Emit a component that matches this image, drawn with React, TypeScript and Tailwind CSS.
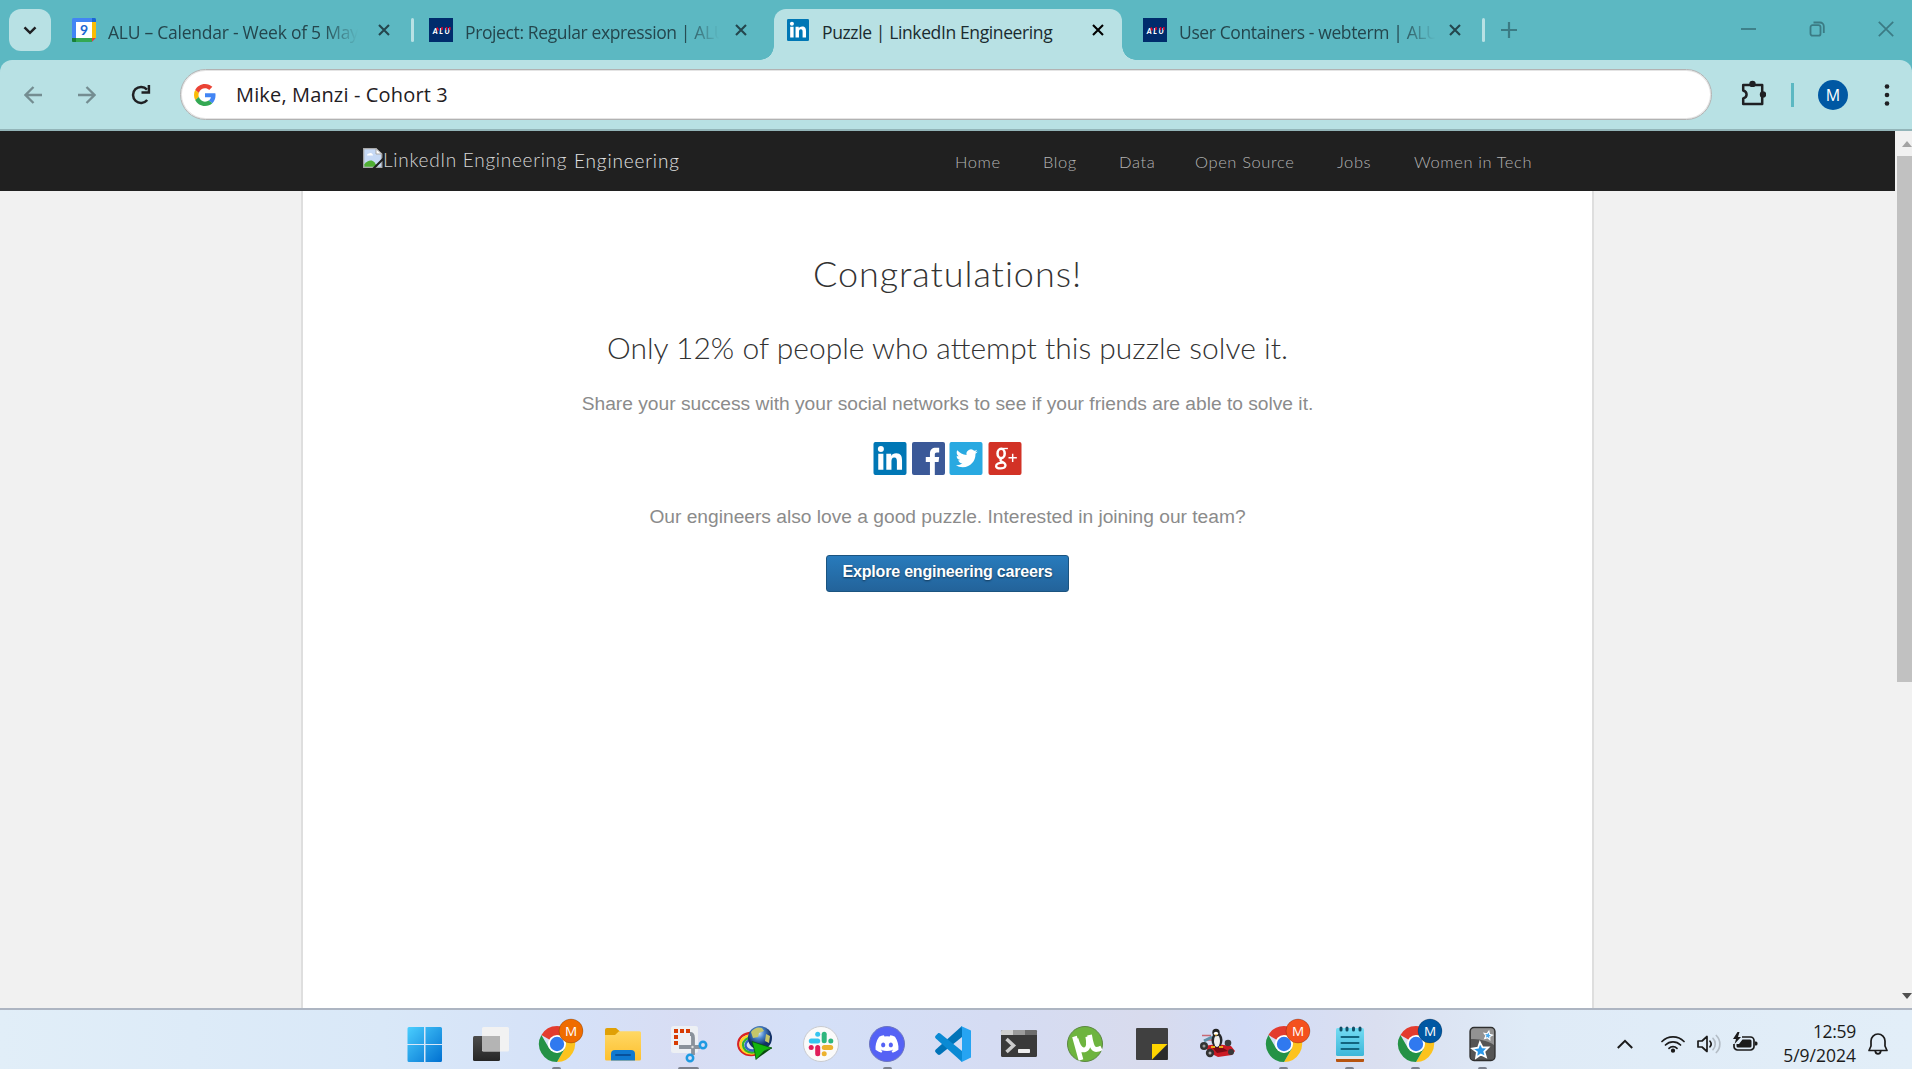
import type { ReactNode } from "react";

/* ---------- favicons and small marks ---------- */

function CalendarIcon() {
  return (
    <svg viewBox="0 0 24 24" className="size-6 shrink-0">
      <rect width="24" height="24" rx="1.5" fill="#4285f4" />
      <path d="M20 0h2.500a1.500 1.500 0 0 1 1.500 1.500V4h-4z" fill="#1967d2" />
      <path d="M20 4h4v16h-4z" fill="#fbbc04" />
      <path d="M0 20h20v4H1.500A1.500 1.500 0 0 1 0 22.500z" fill="#34a853" />
      <path d="M0 20h4v4H1.500A1.500 1.500 0 0 1 0 22.500z" fill="#188038" />
      <path d="M20 20h4l-4 4z" fill="#ea4335" />
      <path d="M24 20v4h-4z" fill="#5cb8c2" />
      <path d="M4 4h16v16H4z" fill="#fff" />
      <text x="12" y="17" textAnchor="middle" fontSize="14" fontWeight="700" fill="#1a67d2" fontFamily="Lato, sans-serif">9</text>
    </svg>
  );
}

function AluIcon() {
  return (
    <svg viewBox="0 0 24 24" className="size-6 shrink-0">
      <rect width="24" height="24" fill="#002c6c" />
      <text x="12.200" y="15.500" textAnchor="middle" fontSize="7.500" fontWeight="900" fontStyle="italic" textLength="17" fill="#fff" fontFamily="Lato, sans-serif">ALU</text>
      <path d="M8 9.500l1.500 3M13 9v3M17.500 9v3M20.800 9v3" stroke="#e4002b" strokeWidth="1.500" />
    </svg>
  );
}

function LinkedInIcon({ className }: { className: string }) {
  return (
    <svg viewBox="0 0 34 34" className={className}>
      <rect width="34" height="34" rx="2" fill="#0077b5" />
      <circle cx="7.600" cy="7.200" r="3.100" fill="#fff" />
      <path d="M4.900 12h5.300v16.500H4.900zM13.200 12h5v2.300c.9-1.500 2.700-2.700 5.200-2.700 4.800 0 6 3.100 6 7.400v9.500h-5.300v-8.400c0-2.200-.3-4.100-2.700-4.100s-2.900 1.900-2.900 4.100v8.400h-5.300z" fill="#fff" />
    </svg>
  );
}

function CloseIcon({ className = "" }: { className?: string }) {
  return (
    <svg viewBox="0 0 12 12" className={`size-3 shrink-0 ${className}`}>
      <path d="M1 1l10 10M11 1L1 11" stroke="currentColor" strokeWidth="2.100" />
    </svg>
  );
}

function GoogleG() {
  return (
    <svg viewBox="0 0 48 48" className="size-[22px] shrink-0">
      <path fill="#ea4335" d="M24 9.500c3.540 0 6.710 1.220 9.210 3.600l6.850-6.850C35.900 2.380 30.470 0 24 0 14.620 0 6.510 5.380 2.560 13.220l7.980 6.190C12.430 13.720 17.740 9.500 24 9.500z" />
      <path fill="#4285f4" d="M46.980 24.550c0-1.570-.15-3.090-.38-4.550H24v9.020h12.940c-.58 2.960-2.260 5.480-4.780 7.180l7.730 6c4.510-4.180 7.090-10.360 7.090-17.650z" />
      <path fill="#fbbc05" d="M10.530 28.590c-.48-1.450-.76-2.990-.76-4.590s.27-3.140.76-4.590l-7.980-6.190C.92 16.460 0 20.120 0 24s.92 7.540 2.560 10.780z" />
      <path fill="#34a853" d="M24 48c6.480 0 11.930-2.130 15.890-5.810l-7.730-6c-2.150 1.450-4.920 2.300-8.160 2.300-6.260 0-11.570-4.220-13.470-9.910l-7.980 6.190C6.510 42.620 14.620 48 24 48z" />
    </svg>
  );
}

/* ---------- browser frame ---------- */

function TabTitle({ children, className }: { children: string; className: string }) {
  return <span className={`mt-[3px] shrink-0 overflow-hidden whitespace-nowrap text-[17.5px] leading-6 ${className}`}>{children}</span>;
}

const fade = "[mask-image:linear-gradient(to_right,black_86%,transparent_100%)]";

function TabStrip() {
  return (
    <div className="flex h-[60px] bg-[#5cb8c2] pt-[9px] text-[#24464d]">
      <button className="ml-[9px] flex h-[42px] w-[42px] items-center justify-center rounded-xl bg-[#b8e1e4] text-[#1f2023]">
        <svg viewBox="0 0 14 9" className="h-[9px] w-[14px]"><path d="M1.500 1.300L7 6.800l5.500-5.500" fill="none" stroke="currentColor" strokeWidth="2.500" /></svg>
      </button>
      <div className="flex h-[42px] w-[363px] items-center pl-[21px]">
        <CalendarIcon />
        <TabTitle className={`ml-3 w-[250px] tracking-[-0.25px] ${fade}`}>ALU – Calendar - Week of 5 May</TabTitle>
        <CloseIcon className="ml-5" />
        <span className="ml-[21px] h-6 w-[3px] shrink-0 rounded-full bg-[#b8e1e4]" />
      </div>
      <div className="flex h-[42px] w-[360px] items-center pl-[15px]">
        <AluIcon />
        <TabTitle className={`ml-3 w-[254px] tracking-[-0.38px] ${fade}`}>Project: Regular expression | ALU</TabTitle>
        <CloseIcon className="ml-4" />
      </div>
      <div className="relative flex h-[51px] w-[348px] items-start rounded-t-xl bg-[#b8e1e4] text-[#1a2b2f]">
        <span className="absolute -left-[14px] bottom-0 size-[14px] bg-[radial-gradient(circle_at_0_0,transparent_13.5px,#b8e1e4_14px)]" />
        <span className="absolute -right-[14px] bottom-0 size-[14px] bg-[radial-gradient(circle_at_100%_0,transparent_13.5px,#b8e1e4_14px)]" />
        <div className="flex h-[42px] items-center pl-[13px]">
          <LinkedInIcon className="size-[22px] shrink-0" />
          <TabTitle className="ml-[13px] w-[250px] tracking-[-0.38px]">Puzzle | LinkedIn Engineering</TabTitle>
          <CloseIcon className="ml-5 text-black" />
        </div>
      </div>
      <div className="flex h-[42px] w-[364px] items-center pl-[21px]">
        <AluIcon />
        <TabTitle className={`ml-3 w-[256px] tracking-[-0.38px] ${fade}`}>User Containers - webterm | ALU</TabTitle>
        <CloseIcon className="ml-[14px]" />
        <span className="ml-[21px] h-6 w-[3px] shrink-0 rounded-full bg-[#b8e1e4]" />
      </div>
      <div className="ml-[15px] flex h-[42px] flex-1 items-center text-[#3b7b84]">
        <svg viewBox="0 0 16 16" className="size-4"><path d="M8 0v16M0 8h16" stroke="currentColor" strokeWidth="2.200" /></svg>
        <div className="mb-[2px] ml-auto flex items-center pr-[18px]">
          <svg viewBox="0 0 16 16" className="size-4"><path d="M0 8h15" stroke="currentColor" strokeWidth="1.800" /></svg>
          <svg viewBox="0 0 16 16" className="ml-[52px] size-4">
            <rect x="1.500" y="4.200" width="10" height="10.500" rx="2" fill="none" stroke="currentColor" strokeWidth="1.800" />
            <path d="M4.500 1.500h6.500a3.800 3.800 0 0 1 3.800 3.800V12" fill="none" stroke="currentColor" strokeWidth="1.800" />
          </svg>
          <svg viewBox="0 0 16 16" className="ml-[53px] size-4"><path d="M.8.8l14.400 14.400M15.200.8L.8 15.200" stroke="currentColor" strokeWidth="1.700" /></svg>
        </div>
      </div>
    </div>
  );
}

function Toolbar() {
  return (
    <div className="bg-[#5cb8c2]">
      <div className="flex h-[71px] items-center rounded-t-xl border-b-2 border-[#93b5b9] bg-[#b8e1e4] pl-6 text-[#1f2023]">
        <svg viewBox="0 0 18 18" className="size-[18px] text-[#748d91]"><path d="M18 9H2M9.500 1L1.500 9l8 8" fill="none" stroke="currentColor" strokeWidth="2.300" /></svg>
        <svg viewBox="0 0 18 18" className="ml-9 size-[18px] text-[#748d91]"><path d="M0 9h16M8.500 1l8 8-8 8" fill="none" stroke="currentColor" strokeWidth="2.300" /></svg>
        <svg viewBox="0 0 20 20" className="ml-[35px] size-5">
          <path d="M16.200 15A8 8 0 1 1 16 4.600" fill="none" stroke="currentColor" strokeWidth="2.500" />
          <path d="M17.900 0v7.500h-7.400" fill="none" stroke="currentColor" strokeWidth="2.500" />
        </svg>
        <div className="ml-[29px] flex h-[51px] w-[1532px] items-center rounded-full border border-[#b2b2b2] bg-white pl-[13px] shadow-[inset_0_0_0_1px_#e4e4e4]">
          <GoogleG />
          <span className="ml-5 whitespace-nowrap text-xl leading-7 tracking-[0.15px]">Mike, Manzi - Cohort 3</span>
        </div>
        <svg viewBox="0 0 26 26" className="mb-[3px] ml-[28px] size-[26px]">
          <path d="M3.200 5h19v19h-19v-5.500c4.500-1.500 4.500-6.500 0-8z" fill="none" stroke="currentColor" strokeWidth="2.500" strokeLinejoin="round" />
          <circle cx="12.500" cy="3.900" r="3.200" fill="currentColor" />
          <circle cx="23" cy="14.500" r="3.200" fill="currentColor" />
        </svg>
        <span className="ml-[25px] h-6 w-[3px] bg-[#5cb8c2]" />
        <span className="ml-6 flex size-[30px] items-center justify-center rounded-full bg-[#0058a3] text-base text-white">M</span>
        <svg viewBox="0 0 6 22" className="ml-[36px] h-[22px] w-[6px]" fill="currentColor"><circle cx="3" cy="2.500" r="2.300" /><circle cx="3" cy="11" r="2.300" /><circle cx="3" cy="19.500" r="2.300" /></svg>
      </div>
    </div>
  );
}

/* ---------- page ---------- */

function BrokenImage() {
  return (
    <svg viewBox="0 0 20 20" className="-mt-[7px] size-5">
      <path d="M.7.700H13l5.800 5.300v13.300H.7z" fill="#c6d9f5" stroke="#a9a9a9" strokeWidth="1.300" />
      <path d="M13 .7V6h5.800z" fill="#fff" stroke="#a9a9a9" />
      <path d="M4 7.500a2 2 0 0 1 2-2 2.500 2.500 0 0 1 4 2z" fill="#fff" />
      <path d="M1.400 18.700v-2.500c3-3.500 7-5 10-2l3 4.500z" fill="#4fae33" />
      <path d="M20 9.500v3L12.500 20H9.500z" fill="#202020" />
    </svg>
  );
}

function SiteHeader() {
  return (
    <header className="flex h-[60px] items-center bg-[#202020] pl-[363px] font-['Lato',sans-serif] font-light">
      <BrokenImage />
      <span className="-mt-[2px] w-[191px] whitespace-nowrap text-[19px] tracking-[0.72px] text-[#d6d6d6]">LinkedIn Engineering</span>
      <span className="mt-px w-[381px] text-[19px] tracking-[0.85px] text-[#e2e2e2]">Engineering</span>
      <nav className="mt-[2px] flex whitespace-nowrap text-[16.5px] tracking-[0.6px] text-[#b3b3b3]">
        <a className="w-[88px]">Home</a>
        <a className="w-[76px]">Blog</a>
        <a className="w-[76px]">Data</a>
        <a className="w-[142px]">Open Source</a>
        <a className="w-[77px]">Jobs</a>
        <a>Women in Tech</a>
      </nav>
    </header>
  );
}

function ShareLinks() {
  return (
    <div className="mt-6 flex h-[33px] gap-[4.5px]">
      <LinkedInIcon className="h-[33px] w-[34px]" />
      <svg viewBox="0 0 34 34" className="size-[33px]">
        <rect width="34" height="34" rx="2" fill="#3b5998" />
        <path d="M18.500 34V20.500h-4.300v-5h4.300v-3.600c0-4 2.300-6 6-6H28v5h-2.300c-1.700 0-2.200.8-2.200 2.200v2.400H28l-.6 5h-3.900V34z" fill="#fff" />
      </svg>
      <svg viewBox="0 0 34 34" className="h-[33px] w-[34px]">
        <rect width="34" height="34" rx="2" fill="#29a9e1" />
        <path transform="translate(6.500 5.500) scale(.94)" d="M23.950 4.570a10 10 0 0 1-2.820.77 4.960 4.960 0 0 0 2.160-2.720 9.900 9.900 0 0 1-3.120 1.190 4.920 4.920 0 0 0-8.380 4.480C7.690 8.100 4.070 6.130 1.640 3.160a4.820 4.820 0 0 0-.67 2.480c0 1.710.87 3.210 2.190 4.100a4.900 4.900 0 0 1-2.230-.62v.06a4.920 4.920 0 0 0 3.950 4.830 5 5 0 0 1-2.210.08 4.940 4.940 0 0 0 4.600 3.420A9.870 9.870 0 0 1 0 19.540a13.990 13.990 0 0 0 7.550 2.210c9.050 0 14-7.500 14-13.980 0-.21 0-.42-.02-.63a9.940 9.940 0 0 0 2.460-2.550z" fill="#fff" />
      </svg>
      <svg viewBox="0 0 34 34" className="h-[33px] w-[34px]">
        <rect width="34" height="34" rx="2" fill="#d23226" />
        <g fill="none" stroke="#fff">
          <ellipse cx="13" cy="11.800" rx="3.700" ry="4.800" strokeWidth="2.600" />
          <path d="M13 6.700h7" strokeWidth="1.400" />
          <path d="M13.500 16.800c-2.300 1.700-1.200 2.600 1 3.800 2.800 1.500 3.500 2.900 2.800 4.500-1.200 2.900-9.300 2.900-9.500-.3-.1-2.400 3.300-3.500 6.700-3.500" strokeWidth="2.300" />
          <path d="M24.900 12v8.600M20.600 16.300h8.600" strokeWidth="1.500" />
        </g>
      </svg>
    </div>
  );
}

function PageContent() {
  return (
    <main className="flex flex-1 justify-center bg-[#f1f1f1]">
      <section className="flex w-[1293px] flex-col items-center border-x-2 border-[#dedede] bg-white pt-[55px] font-['Liberation_Sans',Arial,sans-serif] text-[19.2px] text-[#8b8b8b]">
        <h1 className="font-['Lato',sans-serif] text-4xl font-light leading-[54px] tracking-[0.95px] text-[#333]">Congratulations!</h1>
        <h2 className="mt-[27px] font-['Lato',sans-serif] text-3xl font-light leading-10 text-[#333]">Only 12% of people who attempt this puzzle solve it.</h2>
        <p className="mt-[23px] leading-7">Share your success with your social networks to see if your friends are able to solve it.</p>
        <ShareLinks />
        <p className="mt-7 leading-7">Our engineers also love a good puzzle. Interested in joining our team?</p>
        <button className="mt-[24px] flex h-[37px] w-[243px] justify-center rounded-[3px] border border-[#1b5480] bg-linear-to-b from-[#287bbc] to-[#23639a] pt-[5px] text-base font-bold leading-[22px] tracking-[-0.2px] text-white [text-shadow:0_1px_2px_rgba(0,0,0,0.5)]">
          Explore engineering careers
        </button>
      </section>
    </main>
  );
}

function Scrollbar() {
  return (
    <div className="flex w-[17px] flex-col bg-[#f1f1f1] pl-[2px]">
      <div className="flex h-[25px] items-center justify-end"><svg viewBox="0 0 10 6" className="h-[6px] w-[10px]"><path d="M0 6l5-6 5 6z" fill="#a3a3a3" /></svg></div>
      <div className="h-[526px] bg-[#c1c1c1]" />
      <div className="mt-auto flex h-6 items-center justify-end"><svg viewBox="0 0 10 6" className="h-[6px] w-[10px]"><path d="M0 0l5 6 5-6z" fill="#505050" /></svg></div>
    </div>
  );
}

/* ---------- taskbar ---------- */

function Chrome({ badge }: { badge: string }) {
  return (
    <svg viewBox="0 0 36 36" className="size-9 overflow-visible">
      <path d="M18 18L2.400 9A18 18 0 0 1 33.600 9z" fill="#e33b2e" />
      <path d="M18 9h15.600A18 18 0 0 1 18 36l7.800-13.500z" fill="#fcc31e" />
      <path d="M2.400 9l7.800 13.500L18 27l7.800-4.500L18 36A18 18 0 0 1 2.400 9z" fill="#249246" />
      <circle cx="18" cy="18" r="9" fill="#fff" />
      <circle cx="18" cy="18" r="7.200" fill="#3079ef" />
      <circle cx="32" cy="5" r="12" fill={badge} stroke="#00000040" strokeWidth=".8" />
      <text x="32" y="9.800" textAnchor="middle" fontSize="13.500" fill="#fff" fontFamily="Open Sans, sans-serif">M</text>
    </svg>
  );
}

function Icon({ children }: { children: ReactNode }) {
  return <svg viewBox="0 0 36 36" className="size-9 overflow-visible">{children}</svg>;
}

const star = "M0-10L2.800-3.600 9.800-3 4.500 1.600 6 8.500 0 4.900-6 8.500-4.500 1.600-9.800-3-2.800-3.600z";

const apps: { name: string; open?: "dot" | "bar"; icon: ReactNode }[] = [
  {
    name: "start",
    icon: (
      <Icon>
        <defs><linearGradient id="win" x1="0" y1="0" x2="36" y2="36" gradientUnits="userSpaceOnUse"><stop stopColor="#4cd0ff" /><stop offset="1" stopColor="#006fd0" /></linearGradient></defs>
        <path d="M.5 2.500A1.500 1.500 0 0 1 2 1h15v17H.5zM18.500 1h15A1.500 1.500 0 0 1 35 2.500V18H18.500zM.5 19H17v17H2a1.500 1.500 0 0 1-1.500-1.500zM18.500 19H35v15.500a1.500 1.500 0 0 1-1.500 1.500h-15z" fill="url(#win)" />
      </Icon>
    ),
  },
  {
    name: "tasks",
    icon: (
      <Icon>
        <defs><linearGradient id="tv" x1="0" y1="0" x2="0" y2="1"><stop stopColor="#4c4c4c" /><stop offset="1" stopColor="#262626" /></linearGradient></defs>
        <rect x="0" y="10" width="27" height="25" rx="1.500" fill="url(#tv)" />
        <rect x="9" y="1" width="27" height="24.500" rx="1.500" fill="#f2f2f2" />
        <path d="M9 10h18v15H10.500A1.500 1.500 0 0 1 9 23.500z" fill="#b4b4b4" />
      </Icon>
    ),
  },
  { name: "chrome-orange", open: "dot", icon: <Chrome badge="#ef6c00" /> },
  {
    name: "explorer",
    icon: (
      <Icon>
        <defs><linearGradient id="fold" x1="0" y1="0" x2="0" y2="1"><stop stopColor="#ffd865" /><stop offset="1" stopColor="#fdc02f" /></linearGradient></defs>
        <path d="M0 4a2 2 0 0 1 2-2h9l4 3.500L12 10H0z" fill="#e0a005" />
        <path d="M0 9h10l4-3.800h20.500A1.500 1.500 0 0 1 36 6.700V33a1.500 1.500 0 0 1-1.500 1.500h-33A1.500 1.500 0 0 1 0 33z" fill="url(#fold)" />
        <path d="M6 34.500V28a4 4 0 0 1 4-4h16a4 4 0 0 1 4 4v6.500z" fill="#0f79d0" />
        <path d="M11 29h14" stroke="#07509b" strokeWidth="2" strokeLinecap="round" />
      </Icon>
    ),
  },
  {
    name: "snip",
    open: "bar",
    icon: (
      <Icon>
        <rect x="0" y="0" width="27" height="27" rx="2.500" fill="#edf0f4" />
        <path d="M3 5h4M9 5h4M15 5h4M3 11h4M3 17h4" fill="none" stroke="#d83b01" strokeWidth="4" />
        <path d="M19 8c3 0 3 2 3 4v17M8 21h21" fill="none" stroke="#8a929b" strokeWidth="3.800" />
        <circle cx="21.500" cy="21" r="1.200" fill="#ddd" />
        <circle cx="32" cy="19" r="3.200" fill="none" stroke="#1f9be2" strokeWidth="2.500" />
        <circle cx="19" cy="32" r="3.200" fill="none" stroke="#1f9be2" strokeWidth="2.500" />
      </Icon>
    ),
  },
  {
    name: "idm",
    icon: (
      <Icon>
        <defs><radialGradient id="globe" cx=".45" cy=".3"><stop stopColor="#d5eaf8" /><stop offset=".45" stopColor="#4a85cc" /><stop offset="1" stopColor="#123066" /></radialGradient></defs>
        <g fill="none" strokeWidth="2.300">
          <ellipse cx="14" cy="18" rx="12.800" ry="11" stroke="#d92222" />
          <ellipse cx="14.500" cy="18.500" rx="11" ry="9.200" stroke="#ffd21f" />
          <ellipse cx="15" cy="19" rx="9" ry="7.500" stroke="#35b52b" />
          <ellipse cx="15.500" cy="19" rx="7" ry="5.500" stroke="#3266c7" />
        </g>
        <circle cx="23" cy="12" r="12" fill="url(#globe)" />
        <path d="M14 6c3-4 7-5.500 11-4l2 3-5 2-1 4-5 1zM29 8l4 2-1 7-4-2z" fill="#c5c66a" />
        <path d="M15 15.500L35 22l-8 3-8 8.500-1.500-9z" fill="#14b50e" stroke="#06560a" strokeWidth=".8" />
        <path d="M27 25l8-3-16 11.500z" fill="#064d09" />
      </Icon>
    ),
  },
  {
    name: "slack",
    icon: (
      <Icon>
        <circle cx="18" cy="18" r="17.500" fill="#fafafa" stroke="#c9cbd0" />
        <g strokeWidth="5" strokeLinecap="round">
          <path d="M8.300 15h6.400" stroke="#36c5f0" /><path d="M21.200 8.300v6.400" stroke="#2eb67d" />
          <path d="M21.300 21.500h6.400" stroke="#ecb22e" /><path d="M14.700 21.500v6.300" stroke="#e01e5a" />
          <path d="M14.700 8.300h.01" stroke="#36c5f0" /><path d="M27.800 15h.01" stroke="#2eb67d" /><path d="M21.200 27.800h.01" stroke="#ecb22e" /><path d="M8.200 21.500h.01" stroke="#e01e5a" />
        </g>
      </Icon>
    ),
  },
  {
    name: "discord",
    open: "dot",
    icon: (
      <Icon>
        <circle cx="18" cy="18" r="17.500" fill="#5562f5" stroke="#6b74c0" />
        <path transform="translate(6.500 6.500) scale(.96)" d="M20.320 4.370a19.800 19.800 0 0 0-4.890-1.520c-.2.370-.45.870-.61 1.250a18.300 18.300 0 0 0-5.490 0 12.600 12.600 0 0 0-.62-1.250c-1.710.29-3.350.81-4.880 1.520C.53 9.050-.32 13.580.1 18.060a19.900 19.900 0 0 0 5.990 3.030c.46-.63.870-1.300 1.230-1.990a12 12 0 0 1-1.880-.9l.38-.3a14.300 14.300 0 0 0 12.290 0l.38.3c-.6.350-1.230.64-1.880.9.360.69.770 1.360 1.230 1.990a19.800 19.800 0 0 0 6-3.030c.5-5.180-.84-9.670-3.550-13.660zM8.020 15.330c-1.180 0-2.160-1.080-2.160-2.420s.96-2.420 2.160-2.420c1.210 0 2.180 1.100 2.160 2.420 0 1.340-.96 2.420-2.160 2.420zm7.970 0c-1.180 0-2.150-1.080-2.150-2.420s.95-2.420 2.150-2.420c1.210 0 2.180 1.100 2.160 2.420 0 1.340-.95 2.420-2.160 2.420z" fill="#fff" />
      </Icon>
    ),
  },
  {
    name: "vscode",
    icon: (
      <Icon>
        <path d="M27 0L.8 23.500c-1 1-1 2 0 3l2 2c.8.700 1.700.6 2.500 0L27 11z" fill="#0073b8" />
        <path d="M27 36L.8 12.500c-1-1-1-2 0-3l2-2c.8-.7 1.700-.6 2.500 0L27 25z" fill="#0a8ad4" />
        <path d="M26.500.2c-.8 0 .5 1 .5 3.300v29c0 2-1 3.300-.3 3.500L36 31.600V4.400z" fill="#26a4f2" />
      </Icon>
    ),
  },
  {
    name: "terminal",
    icon: (
      <Icon>
        <rect y="4" width="36" height="27" rx="1.500" fill="#3a3a3a" />
        <path d="M0 9V5.500A1.500 1.500 0 0 1 1.500 4H12v5z" fill="#cfcfcf" /><path d="M12 4h12v5H12z" fill="#9b9b9b" /><path d="M24 4h10.500A1.500 1.500 0 0 1 36 5.500V9H24z" fill="#6d6d6d" />
        <path d="M5.500 13l7 6.500-7 6.500" fill="none" stroke="#cdcdcd" strokeWidth="3.500" />
        <rect x="17" y="23" width="12" height="4" rx=".7" fill="#ededed" />
      </Icon>
    ),
  },
  {
    name: "utorrent",
    icon: (
      <Icon>
        <circle cx="18" cy="18" r="17.500" fill="#6eb43f" stroke="#5b8742" />
        <path d="M7.500 10.500L14 34M9 13c2.500 9 5 11.500 8.500 10.800 4-.8 5-4.500 3.300-13.300M22.500 9c1.500 9 3 14.500 6.500 14.500 2 0 3.500-.5 5.500-1.500" fill="none" stroke="#fff" strokeWidth="4.800" />
      </Icon>
    ),
  },
  {
    name: "notes",
    icon: (
      <Icon>
        <rect x="2" y="2" width="32" height="32" rx="1" fill="#404040" />
        <path d="M18 34L33.500 18.500V33a1 1 0 0 1-1 1z" fill="#2b2b2b" />
        <path d="M18 18h15.500L18 33.500z" fill="#ffd400" />
      </Icon>
    ),
  },
  {
    name: "kart",
    icon: (
      <Icon>
        <path d="M2 9.500h9M4 14h9" stroke="#c86a75" strokeWidth="1.300" />
        <path d="M4 15l8-4" stroke="#5e93aa" strokeWidth="3" />
        <path d="M4 20l13-2 14 2 4 5-3 4-14 2-8-4z" fill="#cb1a24" />
        <path d="M12 21l8-1 8 5-11 2z" fill="#7c0a14" />
        <ellipse cx="17" cy="14" rx="5.500" ry="7.500" fill="#26282c" /><ellipse cx="17" cy="15" rx="3" ry="6" fill="#eee" />
        <circle cx="16" cy="6.500" r="3.700" fill="#222" /><ellipse cx="16" cy="7.500" rx="2.200" ry="1.800" fill="#fff" /><path d="M14.500 8.500h3l-1.500 1.500z" fill="#f0a800" />
        <path d="M11 21h4M19 21h4" stroke="#eda71b" strokeWidth="1.800" />
        <circle cx="4" cy="20" r="4" fill="#333" /><circle cx="10" cy="27" r="4.200" fill="#333" /><circle cx="28" cy="17" r="3.300" fill="#3d3d3d" /><circle cx="31" cy="26" r="3" fill="#383838" />
        <circle cx="4" cy="20" r="1.500" fill="#999" /><circle cx="10" cy="27" r="1.500" fill="#aaa" />
      </Icon>
    ),
  },
  { name: "chrome-red", open: "dot", icon: <Chrome badge="#f4511e" /> },
  {
    name: "notepad",
    open: "dot",
    icon: (
      <Icon>
        <defs><linearGradient id="pad" x1="0" y1="0" x2="0" y2="1"><stop stopColor="#74dcf3" /><stop offset="1" stopColor="#3db7d9" /></linearGradient></defs>
        <rect x="4" y="30" width="28" height="6" rx="1" fill="#b75410" />
        <rect x="4" y="28" width="28" height="5" fill="#e7e7e7" />
        <rect x="4" y="2" width="28" height="28" rx="1.500" fill="url(#pad)" />
        <path d="M9 2v2M15 2v2M21.500 2v2M28 2v2" stroke="#134f66" strokeWidth="3" strokeLinecap="round" />
        <path d="M9.500 11h17M9.500 17h17M9.500 23h17" stroke="#12647f" strokeWidth="2" strokeLinecap="round" />
      </Icon>
    ),
  },
  { name: "chrome-blue", open: "dot", icon: <Chrome badge="#0058a3" /> },
  {
    name: "anki",
    open: "dot",
    icon: (
      <Icon>
        <rect x="6" y="1.500" width="25" height="33" rx="4" fill="#555" stroke="#2f2f2f" strokeWidth="1.300" />
        <path d="M7 5.500a3.300 3.300 0 0 1 3.300-3.300h16.400A3.300 3.300 0 0 1 30 5.500V19C23 14 14 13 7 13z" fill="#929292" />
        <path d={star} transform="translate(16.500 24.500) rotate(-4) scale(.82)" fill="#2a97e8" stroke="#fff" strokeWidth="2.200" />
        <path d={star} transform="translate(24 9.500) rotate(12) scale(.44)" fill="#4aa8ea" stroke="#fff" strokeWidth="2.500" />
      </Icon>
    ),
  },
];

function Tray() {
  return (
    <div className="ml-auto flex items-start text-[#1b1b1b]">
      <svg viewBox="0 0 16 10" className="mt-[29px] h-[10px] w-4"><path d="M.8 9L8 1.800 15.200 9" fill="none" stroke="currentColor" strokeWidth="2" /></svg>
      <svg viewBox="0 0 24 18" className="ml-7 mt-[25px] h-[18px] w-6" fill="none" stroke="currentColor" strokeWidth="1.700" strokeLinecap="round">
        <path d="M1 6.500a15.500 15.500 0 0 1 22 0M4.500 10a10.600 10.600 0 0 1 15 0M8 13.300a5.700 5.700 0 0 1 8 0" /><circle cx="12" cy="15.700" r="1.300" fill="currentColor" />
      </svg>
      <svg viewBox="0 0 24 20" className="ml-3 mt-6 h-5 w-6" fill="none" strokeWidth="1.700" strokeLinecap="round" strokeLinejoin="round">
        <path d="M1 7h4l5-4.500v15L5 13H1z" stroke="currentColor" /><path d="M13 7.200c1.300 1.500 1.300 4 0 5.600" stroke="currentColor" />
        <path d="M16 4.300c3 3 3 8.400 0 11.400M19.300 1.500c4.700 4.700 4.700 12.300 0 17" stroke="#b3bcc5" />
      </svg>
      <svg viewBox="0 0 25 20" className="ml-3 mt-[22px] h-5 w-[25px]" fill="currentColor">
        <path d="M9 5h8.500A3.500 3.500 0 0 1 21 8.500v6a3.500 3.500 0 0 1-3.500 3.500h-13A3.500 3.500 0 0 1 1 14.500V12" fill="none" stroke="currentColor" strokeWidth="1.700" />
        <path d="M9.500 7.500H17A1.500 1.500 0 0 1 18.500 9v5a1.500 1.500 0 0 1-1.500 1.500H5A1.500 1.500 0 0 1 3.500 14v-2H6z" /><path d="M22 9.500h1a1.500 1.500 0 0 1 1.500 1.500v1a1.500 1.500 0 0 1-1.500 1.500h-1z" />
        <path d="M4.500 0L0 7h3l-1.500 5L8 5H5L6.500 0z" />
      </svg>
      <div className="mt-[9px] w-[98px] text-right text-[17.5px] leading-6"><div className="tracking-[-0.3px]">12:59</div><div>5/9/2024</div></div>
      <svg viewBox="0 0 20 22" className="ml-3 mr-6 mt-[23px] h-[22px] w-5" fill="none" stroke="currentColor" strokeWidth="1.700" strokeLinejoin="round">
        <path d="M1 17.500l2-4.500V8a7 7 0 0 1 14 0v5l2 4.500zM7.200 18c.3 1.800 1.400 2.800 2.800 2.800s2.500-1 2.800-2.800" />
      </svg>
    </div>
  );
}

function Taskbar() {
  return (
    <footer className="flex h-[61px] overflow-hidden border-t-2 border-[#adb5c2] bg-[linear-gradient(to_right,#e1eef8_0%,#d9e8f8_20%,#d5e1f8_30%,#d8ddf3_36%,#d4e0f8_42%,#d5dcf3_52%,#d8dbed_60%,#d2dcf7_65%,#dadff0_72%,#dfebf7_80%,#e2eef8_100%)] pl-[391.5px]">
      {apps.map((a) => (
        <div key={a.name} className="flex w-[66.1px] shrink-0 flex-col items-center pt-4">
          {a.icon}
          {a.open === "dot" && <span className="mt-[5px] h-1 w-[9px] shrink-0 rounded-full bg-[#7b818e]" />}
          {a.open === "bar" && <span className="mt-[5px] h-1 w-[21px] shrink-0 rounded-full bg-[#7b818e]" />}
        </div>
      ))}
      <Tray />
    </footer>
  );
}

export default function App() {
  return (
    <div className="flex h-[1069px] w-[1912px] flex-col overflow-hidden bg-white font-['Open_Sans',sans-serif]">
      <TabStrip />
      <Toolbar />
      <div className="flex flex-1">
        <div className="flex flex-1 flex-col">
          <SiteHeader />
          <PageContent />
        </div>
        <Scrollbar />
      </div>
      <Taskbar />
    </div>
  );
}
